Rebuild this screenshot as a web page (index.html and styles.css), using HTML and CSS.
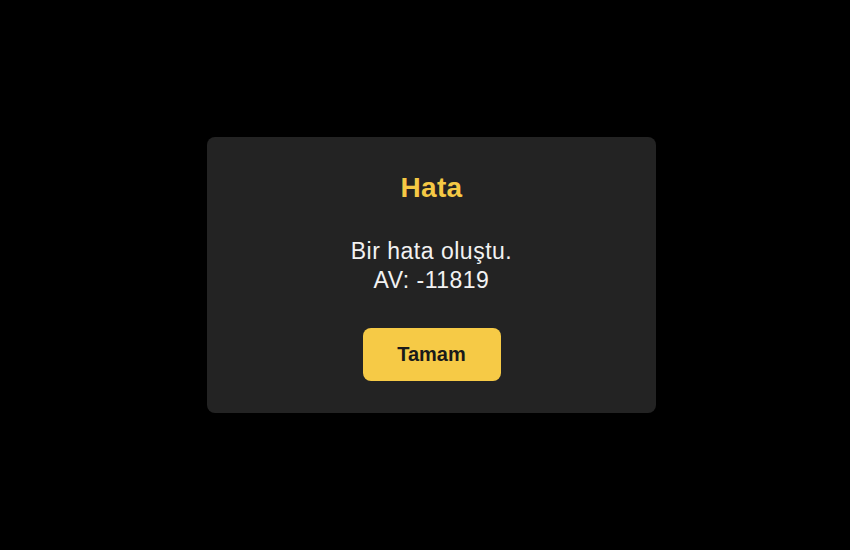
FILE: index.html
```html
<!DOCTYPE html>
<html lang="tr">
<head>
    <meta charset="UTF-8">
    <meta name="viewport" content="width=device-width, initial-scale=1.0">
    <title>Hata</title>
    <link rel="stylesheet" href="styles.css">
</head>
<body>
    <div class="alert-box">
        <h1 class="alert-title">Hata</h1>
        <p class="alert-message">Bir hata oluştu.<br>AV: -11819</p>
        <button type="button" class="alert-btn">Tamam</button>
    </div>
</body>
</html>
```

FILE: styles.css
```css
body {
    font-family: 'Liberation Sans', Arial, Helvetica, sans-serif;
    margin: 0;
    padding: 0;
    background-color: #000;
    display: flex;
    justify-content: center;
    align-items: center;
    min-height: 100vh;
}
.alert-box {
    background-color: #232323;
    border-radius: 8px;
    width: 449px;
    box-sizing: border-box;
    padding: 34px 20px 32px;
    margin-left: 13px;
    display: flex;
    flex-direction: column;
    align-items: center;
    text-align: center;
}
.alert-title {
    color: #f5c945;
    font-size: 28px;
    font-weight: bold;
    line-height: 34px;
    letter-spacing: 0.3px;
    margin: 0;
}
.alert-message {
    color: #f2f2f2;
    font-size: 23px;
    line-height: 29px;
    letter-spacing: 0.5px;
    margin: 32px 0 0;
}
.alert-btn {
    margin-top: 33px;
    width: 138px;
    height: 53px;
    background-color: #f6ca46;
    color: #1a1a1a;
    border: none;
    border-radius: 8px;
    font-family: inherit;
    font-size: 20px;
    font-weight: bold;
    cursor: pointer;
}
```
